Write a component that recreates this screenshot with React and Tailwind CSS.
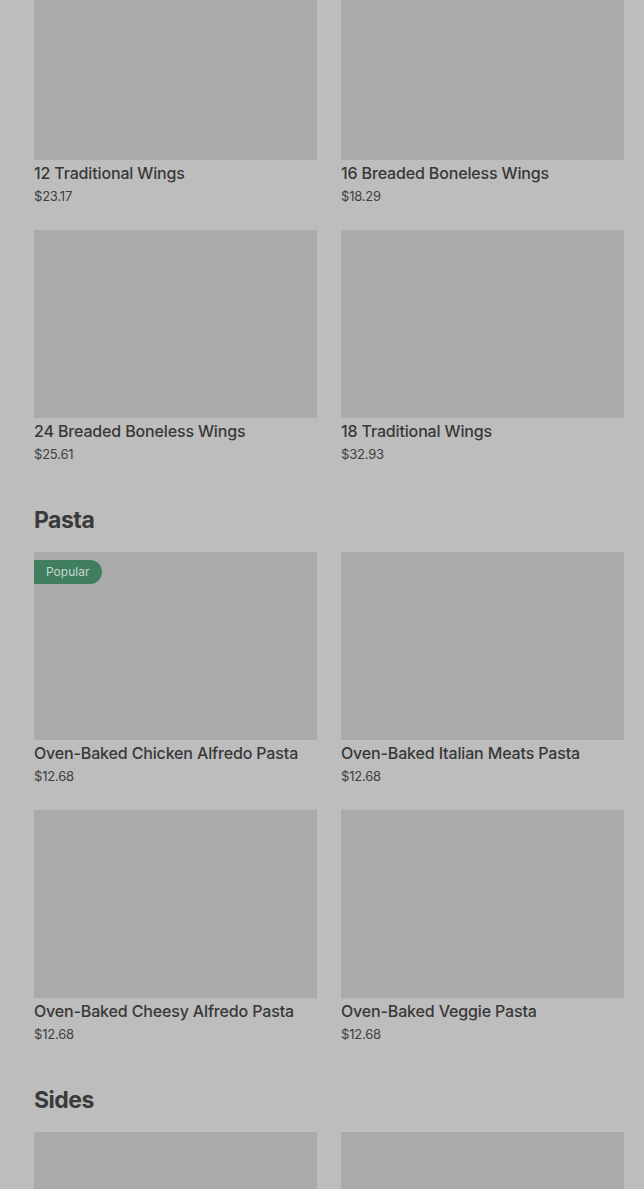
const WINGS = [
    { name: '12 Traditional Wings', price: '$23.17' },
    { name: '16 Breaded Boneless Wings', price: '$18.29' },
    { name: '24 Breaded Boneless Wings', price: '$25.61' },
    { name: '18 Traditional Wings', price: '$32.93' },
];

const PASTA = [
    { name: 'Oven-Baked Chicken Alfredo Pasta', price: '$12.68', popular: true },
    { name: 'Oven-Baked Italian Meats Pasta', price: '$12.68' },
    { name: 'Oven-Baked Cheesy Alfredo Pasta', price: '$12.68' },
    { name: 'Oven-Baked Veggie Pasta', price: '$12.68' },
];

// only the tops of the sides cards show in the viewport
const SIDES = [{ id: 's1' }, { id: 's2' }];

function ItemCard({ item }) {
    return (
        <div className="flex flex-col">
            <div className="relative h-[188px] bg-[#aaaaaa]">
                {item.popular && (
                    <span className="absolute left-0 top-[8px] rounded-r-full bg-[#3f7f5f] pl-[12px] pr-[13px] text-[12px] leading-[24px] text-[#c7d8cf]">
                        Popular
                    </span>
                )}
            </div>
            {item.name && (
                <>
                    <p className="mt-[3px] text-[16px] font-medium leading-[20px] tracking-[-0.15px] text-[#383838]">{item.name}</p>
                    <p className="mt-[5px] text-[13px] leading-[16px] tracking-[-0.2px] text-[#404040]">{item.price}</p>
                </>
            )}
        </div>
    );
}

function Section({ title, items }) {
    return (
        <section>
            {title && (
                <h2 className="mt-px mb-[17px] text-[23px] font-bold leading-[30px] tracking-[-0.5px] text-[#3a3a3a]">
                    {title}
                </h2>
            )}
            <div className="grid grid-cols-2 gap-x-[24px] gap-y-[26px]">
                {items.map((it) => <ItemCard key={it.name || it.id} item={it} />)}
            </div>
        </section>
    );
}

export default function App() {
    return (
        <div className="h-[1189px] overflow-hidden bg-[#bdbdbd] font-['Inter',sans-serif]">
            <div className="-mt-[28px] flex flex-col gap-[42px] pl-[34px] pr-[20px]">
                <Section items={WINGS} />
                <Section title="Pasta" items={PASTA} />
                <Section title="Sides" items={SIDES} />
            </div>
        </div>
    );
}
